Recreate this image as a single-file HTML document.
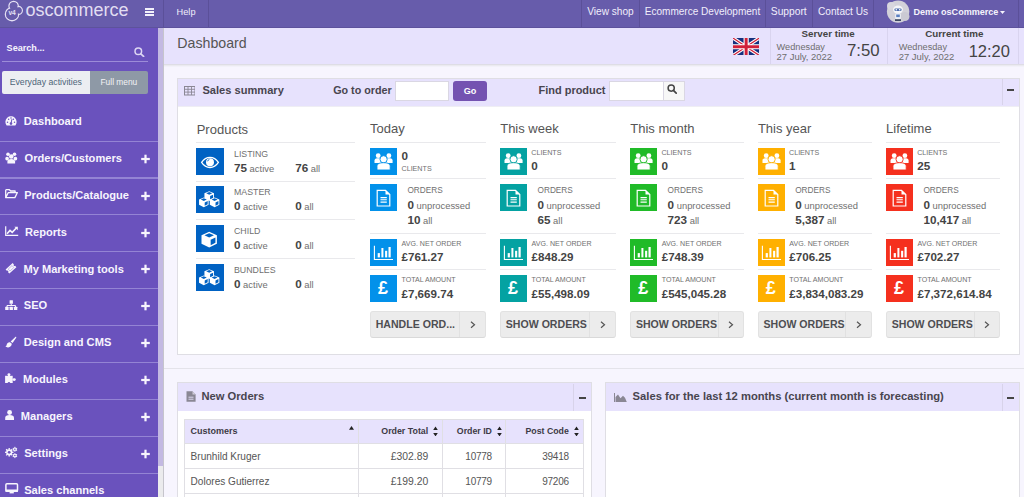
<!DOCTYPE html>
<html><head><meta charset="utf-8"><title>Dashboard</title>
<style>
html,body{margin:0;padding:0;}
body{width:1024px;height:497px;overflow:hidden;position:relative;font-family:"Liberation Sans",sans-serif;background:#f7f5fe;}
.t{position:absolute;white-space:nowrap;}
.r{position:absolute;display:block;}
</style></head><body>
<div class="r" style="left:0.00px;top:0.00px;width:1024.00px;height:497.00px;background:#f7f5fe;"></div>
<div class="r" style="left:0.00px;top:0.00px;width:1024.00px;height:28.00px;background:#675cab;"></div>
<div class="r" style="left:0.00px;top:27.00px;width:1024.00px;height:1.00px;background:#5d529c;"></div>
<div class="r" style="left:0.00px;top:28.00px;width:158.30px;height:469.00px;background:#6a52bd;"></div>
<div class="r" style="left:158.30px;top:28.00px;width:5.00px;height:469.00px;background:#ebebed;"></div>
<div class="r" style="left:158.30px;top:28.00px;width:5.00px;height:437.80px;background:#c3b9e2;"></div>
<div class="r" style="left:163.30px;top:28.00px;width:0.90px;height:469.00px;background:#c6c5cc;"></div>
<div class="r" style="left:164.20px;top:28.00px;width:859.80px;height:36.00px;background:#e7e2fd;"></div>
<div class="r" style="left:164.20px;top:64.00px;width:859.80px;height:1.00px;background:#dedde5;"></div>
<div class="r" style="left:164.20px;top:65.00px;width:859.80px;height:1.00px;background:#ebeaf0;"></div>
<div class="r" style="left:164.20px;top:66.00px;width:859.80px;height:1.00px;background:#f2f1f9;"></div>
<div class="r" style="left:162.50px;top:0.00px;width:1.00px;height:27.00px;background:#5b5099;"></div>
<div class="r" style="left:207.50px;top:0.00px;width:1.00px;height:27.00px;background:#5b5099;"></div>
<div class="r" style="left:581.00px;top:0.00px;width:1.00px;height:27.00px;background:#5b5099;"></div>
<div class="r" style="left:639.00px;top:0.00px;width:1.00px;height:27.00px;background:#5b5099;"></div>
<div class="r" style="left:765.00px;top:0.00px;width:1.00px;height:27.00px;background:#5b5099;"></div>
<div class="r" style="left:812.30px;top:0.00px;width:1.00px;height:27.00px;background:#5b5099;"></div>
<div class="r" style="left:872.90px;top:0.00px;width:1.00px;height:27.00px;background:#5b5099;"></div>
<div class="r" style="left:1018.00px;top:0.00px;width:1.00px;height:27.00px;background:#5b5099;"></div>
<svg class="r" style="left:0.00px;top:0.00px;" width="26" height="24" viewBox="0 0 26 24"><g fill="none" stroke="#e4e0f3" stroke-width="1.4"><circle cx="12" cy="14.2" r="6.6"/><circle cx="13.6" cy="6.1" r="4.6"/><circle cx="18.4" cy="10.4" r="3.9"/></g><g fill="#675cab"><circle cx="12" cy="14.2" r="5.9"/><circle cx="13.6" cy="6.1" r="3.9"/><circle cx="18.4" cy="10.4" r="3.2"/></g><text x="8.4" y="15.4" font-size="6.6" font-weight="700" fill="#e4e0f3" font-family="Liberation Sans">v4</text></svg>
<div class="t" style="left:25.50px;top:1.46px;font-size:18px;line-height:18px;font-weight:400;color:#e2def2;">oscommerce</div>
<div class="r" style="left:145.20px;top:8.30px;width:9.00px;height:1.60px;background:#f3f1fb;"></div>
<div class="r" style="left:145.20px;top:11.20px;width:9.00px;height:1.60px;background:#f3f1fb;"></div>
<div class="r" style="left:145.20px;top:14.10px;width:9.00px;height:1.60px;background:#f3f1fb;"></div>
<div class="t" style="left:176.60px;top:7.61px;font-size:9.2px;line-height:9.2px;font-weight:400;color:#f1eefb;">Help</div>
<div class="t" style="left:587.30px;top:7.35px;font-size:10.1px;line-height:10.1px;font-weight:400;color:#f1eefb;">View shop</div>
<div class="t" style="left:644.80px;top:7.40px;font-size:10.04px;line-height:10.04px;font-weight:400;color:#f1eefb;">Ecommerce Development</div>
<div class="t" style="left:770.80px;top:7.22px;font-size:10.25px;line-height:10.25px;font-weight:400;color:#f1eefb;">Support</div>
<div class="t" style="left:818.00px;top:7.31px;font-size:10.15px;line-height:10.15px;font-weight:400;color:#f1eefb;">Contact Us</div>
<svg class="r" style="left:885.50px;top:0.00px;" width="25" height="24" viewBox="0 0 25 24"><circle cx="12.1" cy="11.6" r="11.2" fill="#d2d1d9"/><circle cx="5" cy="6" r="4" fill="#d8d7de"/><circle cx="19" cy="16.5" r="4.5" fill="#cbcad3"/><ellipse cx="12" cy="9.6" rx="5" ry="4" fill="#f4f5f8"/><rect x="8.4" y="8.4" width="7.2" height="2.6" rx="1.2" fill="#4f6fae"/><circle cx="10.3" cy="9.7" r=".8" fill="#fff"/><circle cx="13.7" cy="9.7" r=".8" fill="#fff"/><rect x="9.2" y="13.3" width="5.6" height="6" rx="1.5" fill="#eef1f7"/><rect x="10.2" y="14.5" width="3.6" height="2.6" fill="#5a7fc0"/><rect x="9" y="19.3" width="6" height="1.6" fill="#2e3a55"/></svg>
<div class="t" style="left:913.40px;top:7.64px;font-size:9.05px;line-height:9.05px;font-weight:700;color:#f5f3fc;">Demo osCommerce</div>
<svg class="r" style="left:1000.30px;top:10.50px;" width="5" height="3" viewBox="0 0 5 3"><path d="M0 0h5l-2.5 3z" fill="#f5f3fc"/></svg>
<div class="t" style="left:177.30px;top:36.28px;font-size:14.2px;line-height:14.2px;font-weight:400;color:#555;">Dashboard</div>
<svg class="r" style="left:732.50px;top:37.50px;" width="26.3" height="17.5" viewBox="0 0 26.3 17.5"><rect width="26.3" height="17.5" fill="#15307f"/>
<path d="M0 0L26.3 17.5M26.3 0L0 17.5" stroke="#fff" stroke-width="3.4"/>
<path d="M0 0L26.3 17.5M26.3 0L0 17.5" stroke="#d0203a" stroke-width="1.2"/>
<path d="M13.15 0V17.5M0 8.75H26.3" stroke="#fff" stroke-width="5.2"/>
<path d="M13.15 0V17.5M0 8.75H26.3" stroke="#d0203a" stroke-width="3"/></svg>
<div class="r" style="left:769.50px;top:28.00px;width:1.00px;height:36.00px;background:#d9d4ef;"></div>
<div class="r" style="left:886.90px;top:28.00px;width:1.00px;height:36.00px;background:#d9d4ef;"></div>
<div class="r" style="left:1018.20px;top:28.00px;width:1.00px;height:36.00px;background:#d9d4ef;"></div>
<div class="t" style="left:801.60px;top:29.15px;font-size:9.75px;line-height:9.75px;font-weight:700;color:#444;">Server time</div>
<div class="t" style="left:776.60px;top:42.91px;font-size:9.2px;line-height:9.2px;font-weight:400;color:#6e6e6e;">Wednesday</div>
<div class="t" style="left:776.60px;top:52.09px;font-size:9.46px;line-height:9.46px;font-weight:400;color:#6e6e6e;">27 July, 2022</div>
<div class="t" style="left:846.90px;top:42.98px;font-size:16.8px;line-height:16.8px;font-weight:400;color:#444;">7:50</div>
<div class="t" style="left:925.25px;top:29.10px;font-size:9.8px;line-height:9.8px;font-weight:700;color:#444;">Current time</div>
<div class="t" style="left:898.70px;top:42.91px;font-size:9.2px;line-height:9.2px;font-weight:400;color:#6e6e6e;">Wednesday</div>
<div class="t" style="left:898.70px;top:52.09px;font-size:9.46px;line-height:9.46px;font-weight:400;color:#6e6e6e;">27 July, 2022</div>
<div class="t" style="left:968.70px;top:43.23px;font-size:16.5px;line-height:16.5px;font-weight:400;color:#444;">12:20</div>
<div class="t" style="left:6.60px;top:43.70px;font-size:9.1px;line-height:9.1px;font-weight:700;color:#f7f5fd;">Search...</div>
<svg class="r" style="left:133.50px;top:47.00px;" width="11" height="10" viewBox="0 0 11 10"><circle cx="4.3" cy="4.2" r="3.3" fill="none" stroke="#ddd6f3" stroke-width="1.5"/><path d="M6.8 6.8L9.6 9.4" stroke="#ddd6f3" stroke-width="1.7" stroke-linecap="round"/></svg>
<div class="r" style="left:2.20px;top:60.60px;width:145.50px;height:1.00px;background:#9c8cd8;"></div>
<div class="r" style="left:2.30px;top:71.30px;width:87.50px;height:22.70px;background:#eceef2;border-radius:2px 0 0 2px;"></div>
<div class="r" style="left:89.80px;top:71.30px;width:57.90px;height:22.70px;background:#8e99a6;border-radius:0 2px 2px 0;"></div>
<div class="t" style="left:9.70px;top:78.11px;font-size:8.73px;line-height:8.73px;font-weight:400;color:#4d6578;">Everyday activities</div>
<div class="t" style="left:100.50px;top:78.39px;font-size:8.4px;line-height:8.4px;font-weight:400;color:#f2f3f5;">Full menu</div>
<div class="t" style="left:23.80px;top:115.90px;font-size:11.1px;line-height:11.1px;font-weight:700;color:#f7f5fd;">Dashboard</div>
<div class="r" style="left:0.00px;top:140.50px;width:158.30px;height:1.20px;background:#9484d4;"></div>
<div class="t" style="left:24.50px;top:152.80px;font-size:11.1px;line-height:11.1px;font-weight:700;color:#f7f5fd;">Orders/Customers</div>
<svg class="r" style="left:140.00px;top:153.70px;" width="11" height="10" viewBox="0 0 11 10"><rect x="1.2" y="3.9" width="8.6" height="2.2" fill="#f7f5fd"/><rect x="4.4" y=".7" width="2.2" height="8.6" fill="#f7f5fd"/></svg>
<div class="r" style="left:0.00px;top:177.40px;width:158.30px;height:1.20px;background:#9484d4;"></div>
<div class="t" style="left:24.20px;top:189.70px;font-size:11.1px;line-height:11.1px;font-weight:700;color:#f7f5fd;">Products/Catalogue</div>
<svg class="r" style="left:140.00px;top:190.60px;" width="11" height="10" viewBox="0 0 11 10"><rect x="1.2" y="3.9" width="8.6" height="2.2" fill="#f7f5fd"/><rect x="4.4" y=".7" width="2.2" height="8.6" fill="#f7f5fd"/></svg>
<div class="r" style="left:0.00px;top:214.30px;width:158.30px;height:1.20px;background:#9484d4;"></div>
<div class="t" style="left:25.00px;top:226.60px;font-size:11.1px;line-height:11.1px;font-weight:700;color:#f7f5fd;">Reports</div>
<svg class="r" style="left:140.00px;top:227.50px;" width="11" height="10" viewBox="0 0 11 10"><rect x="1.2" y="3.9" width="8.6" height="2.2" fill="#f7f5fd"/><rect x="4.4" y=".7" width="2.2" height="8.6" fill="#f7f5fd"/></svg>
<div class="r" style="left:0.00px;top:251.20px;width:158.30px;height:1.20px;background:#9484d4;"></div>
<div class="t" style="left:23.40px;top:263.50px;font-size:11.1px;line-height:11.1px;font-weight:700;color:#f7f5fd;">My Marketing tools</div>
<svg class="r" style="left:140.00px;top:264.40px;" width="11" height="10" viewBox="0 0 11 10"><rect x="1.2" y="3.9" width="8.6" height="2.2" fill="#f7f5fd"/><rect x="4.4" y=".7" width="2.2" height="8.6" fill="#f7f5fd"/></svg>
<div class="r" style="left:0.00px;top:288.10px;width:158.30px;height:1.20px;background:#9484d4;"></div>
<div class="t" style="left:23.75px;top:300.40px;font-size:11.1px;line-height:11.1px;font-weight:700;color:#f7f5fd;">SEO</div>
<svg class="r" style="left:140.00px;top:301.30px;" width="11" height="10" viewBox="0 0 11 10"><rect x="1.2" y="3.9" width="8.6" height="2.2" fill="#f7f5fd"/><rect x="4.4" y=".7" width="2.2" height="8.6" fill="#f7f5fd"/></svg>
<div class="r" style="left:0.00px;top:325.00px;width:158.30px;height:1.20px;background:#9484d4;"></div>
<div class="t" style="left:23.75px;top:337.30px;font-size:11.1px;line-height:11.1px;font-weight:700;color:#f7f5fd;">Design and CMS</div>
<svg class="r" style="left:140.00px;top:338.20px;" width="11" height="10" viewBox="0 0 11 10"><rect x="1.2" y="3.9" width="8.6" height="2.2" fill="#f7f5fd"/><rect x="4.4" y=".7" width="2.2" height="8.6" fill="#f7f5fd"/></svg>
<div class="r" style="left:0.00px;top:361.90px;width:158.30px;height:1.20px;background:#9484d4;"></div>
<div class="t" style="left:22.90px;top:374.20px;font-size:11.1px;line-height:11.1px;font-weight:700;color:#f7f5fd;">Modules</div>
<svg class="r" style="left:140.00px;top:375.10px;" width="11" height="10" viewBox="0 0 11 10"><rect x="1.2" y="3.9" width="8.6" height="2.2" fill="#f7f5fd"/><rect x="4.4" y=".7" width="2.2" height="8.6" fill="#f7f5fd"/></svg>
<div class="r" style="left:0.00px;top:398.80px;width:158.30px;height:1.20px;background:#9484d4;"></div>
<div class="t" style="left:20.80px;top:411.10px;font-size:11.1px;line-height:11.1px;font-weight:700;color:#f7f5fd;">Managers</div>
<svg class="r" style="left:140.00px;top:412.00px;" width="11" height="10" viewBox="0 0 11 10"><rect x="1.2" y="3.9" width="8.6" height="2.2" fill="#f7f5fd"/><rect x="4.4" y=".7" width="2.2" height="8.6" fill="#f7f5fd"/></svg>
<div class="r" style="left:0.00px;top:435.70px;width:158.30px;height:1.20px;background:#9484d4;"></div>
<div class="t" style="left:24.20px;top:448.00px;font-size:11.1px;line-height:11.1px;font-weight:700;color:#f7f5fd;">Settings</div>
<svg class="r" style="left:140.00px;top:448.90px;" width="11" height="10" viewBox="0 0 11 10"><rect x="1.2" y="3.9" width="8.6" height="2.2" fill="#f7f5fd"/><rect x="4.4" y=".7" width="2.2" height="8.6" fill="#f7f5fd"/></svg>
<div class="r" style="left:0.00px;top:472.60px;width:158.30px;height:1.20px;background:#9484d4;"></div>
<div class="t" style="left:24.20px;top:484.90px;font-size:11.1px;line-height:11.1px;font-weight:700;color:#f7f5fd;">Sales channels</div>
<svg class="r" style="left:5.20px;top:115.80px;" width="12" height="10" viewBox="0 0 12 10"><path d="M1.63 9.4A5.6 5.6 0 1 1 10.37 9.4Z" fill="#f7f5fd"/><circle cx="6" cy="7.6" r="1.3" fill="#6a52bd"/><path d="M6 7.6L6.9 3.2" stroke="#6a52bd" stroke-width="1"/><circle cx="2.5" cy="6.2" r=".75" fill="#6a52bd"/><circle cx="3.6" cy="3.3" r=".75" fill="#6a52bd"/><circle cx="6" cy="2" r=".75" fill="#6a52bd"/><circle cx="8.4" cy="3.3" r=".75" fill="#6a52bd"/><circle cx="9.5" cy="6.2" r=".75" fill="#6a52bd"/></svg>
<svg class="r" style="left:5.20px;top:151.50px;" width="12.5" height="12" viewBox="0 0 12.5 12"><circle cx="3" cy="2.2" r="1.8" fill="#f7f5fd"/><circle cx="9.5" cy="2.2" r="1.8" fill="#f7f5fd"/><circle cx="6.25" cy="4.5" r="2.3" fill="#f7f5fd"/><rect x="0.3" y="4.8" width="3.6" height="3.6" rx="1.6" fill="#f7f5fd"/><rect x="8.6" y="4.8" width="3.6" height="3.6" rx="1.6" fill="#f7f5fd"/><path d="M2.4 11.4V9.5c0-1.7 1.6-2.6 3.85-2.6s3.85.9 3.85 2.6v1.9z" fill="#f7f5fd"/></svg>
<svg class="r" style="left:5.20px;top:189.20px;" width="13" height="9.5" viewBox="0 0 13 9.5"><path d="M0.7 8.6V1.4c0-.4.3-.7.7-.7h3l1.2 1.3h4.5v1.6M0.7 8.6h9.2l2.4-4.9H3.2z" fill="none" stroke="#f7f5fd" stroke-width="1.3" stroke-linejoin="round"/></svg>
<svg class="r" style="left:5.20px;top:226.00px;" width="13.5" height="10" viewBox="0 0 13.5 10"><path d="M0.7 0.3V9.3H13.2" fill="none" stroke="#f7f5fd" stroke-width="1.2"/><path d="M2 7.8L5 4.4L7.2 6.3L11.6 1.8" fill="none" stroke="#f7f5fd" stroke-width="1.6"/><path d="M9.4 0.8h3.4v3.4z" fill="#f7f5fd"/></svg>
<svg class="r" style="left:5.00px;top:261.50px;" width="12" height="13" viewBox="0 0 12 13"><g transform="rotate(-42 6 6.3)"><path d="M1.25 3.5H10.75V5.4A.9 .9 0 0 0 10.75 7.2V9.1H1.25V7.2A.9 .9 0 0 0 1.25 5.4Z" fill="#f7f5fd"/><rect x="3.4" y="5" width="5.2" height="2.6" fill="none" stroke="#b2a6e4" stroke-width=".7"/></g></svg>
<svg class="r" style="left:5.20px;top:299.50px;" width="12.5" height="10.5" viewBox="0 0 12.5 10.5"><rect x="4.6" y="0.2" width="3.3" height="3.6" rx=".4" fill="#f7f5fd"/><path d="M6.25 3.8V5.5M2 7V5.5H10.5V7" fill="none" stroke="#f7f5fd" stroke-width="1"/><rect x="0.2" y="6.8" width="3.4" height="3.5" rx=".4" fill="#f7f5fd"/><rect x="4.55" y="6.8" width="3.4" height="3.5" rx=".4" fill="#f7f5fd"/><rect x="8.9" y="6.8" width="3.4" height="3.5" rx=".4" fill="#f7f5fd"/></svg>
<svg class="r" style="left:5.00px;top:335.50px;" width="12" height="12.5" viewBox="0 0 12 12.5"><path d="M10.3 0.9c.6-.4 1.3.2.9.8L7.6 7.1 5.6 5.6z" fill="#f7f5fd"/><path d="M5 6.3l1.8 1.4c-.1 2.1-1.6 3.6-3.6 3.7-1.1.1-2.2-.3-2.9-.8.9-.4 1.2-1 1.4-1.9.3-1.6 1.6-2.6 3.3-2.4z" fill="#f7f5fd"/></svg>
<svg class="r" style="left:5.20px;top:372.80px;" width="11.5" height="10.5" viewBox="0 0 11.5 10.5"><rect x="0.1" y="2.8" width="7.6" height="7.3" fill="#f7f5fd"/><circle cx="3.95" cy="1.6" r="1.45" fill="#f7f5fd"/><rect x="3.1" y="1.6" width="1.7" height="1.5" fill="#f7f5fd"/><circle cx="9.3" cy="6.6" r="1.45" fill="#f7f5fd"/><rect x="7.5" y="5.8" width="1.8" height="1.6" fill="#f7f5fd"/><circle cx="3.95" cy="10.3" r="1.35" fill="#6a52bd"/></svg>
<svg class="r" style="left:5.20px;top:410.00px;" width="9" height="10" viewBox="0 0 9 10"><circle cx="4.6" cy="2.5" r="2.4" fill="#f7f5fd"/><path d="M0.2 10V7.7c0-1.8 1.6-2.8 4.4-2.8s4.4 1 4.4 2.8V10z" fill="#f7f5fd"/></svg>
<svg class="r" style="left:5.00px;top:446.00px;" width="13" height="13" viewBox="0 0 13 13"><circle cx="4.2" cy="6.3" r="3.1" fill="#f7f5fd"/><rect x="3.55" y="2.00" width="1.3" height="1.70" fill="#f7f5fd" transform="rotate(0.0 4.2 6.3)"/><rect x="3.55" y="2.00" width="1.3" height="1.70" fill="#f7f5fd" transform="rotate(45.0 4.2 6.3)"/><rect x="3.55" y="2.00" width="1.3" height="1.70" fill="#f7f5fd" transform="rotate(90.0 4.2 6.3)"/><rect x="3.55" y="2.00" width="1.3" height="1.70" fill="#f7f5fd" transform="rotate(135.0 4.2 6.3)"/><rect x="3.55" y="2.00" width="1.3" height="1.70" fill="#f7f5fd" transform="rotate(180.0 4.2 6.3)"/><rect x="3.55" y="2.00" width="1.3" height="1.70" fill="#f7f5fd" transform="rotate(225.0 4.2 6.3)"/><rect x="3.55" y="2.00" width="1.3" height="1.70" fill="#f7f5fd" transform="rotate(270.0 4.2 6.3)"/><rect x="3.55" y="2.00" width="1.3" height="1.70" fill="#f7f5fd" transform="rotate(315.0 4.2 6.3)"/><circle cx="4.2" cy="6.3" r="1.4" fill="#6a52bd"/><circle cx="9.9" cy="3.3" r="1.8" fill="#f7f5fd"/><rect x="9.45" y="0.80" width="0.9" height="1.20" fill="#f7f5fd" transform="rotate(0.0 9.9 3.3)"/><rect x="9.45" y="0.80" width="0.9" height="1.20" fill="#f7f5fd" transform="rotate(60.0 9.9 3.3)"/><rect x="9.45" y="0.80" width="0.9" height="1.20" fill="#f7f5fd" transform="rotate(120.0 9.9 3.3)"/><rect x="9.45" y="0.80" width="0.9" height="1.20" fill="#f7f5fd" transform="rotate(180.0 9.9 3.3)"/><rect x="9.45" y="0.80" width="0.9" height="1.20" fill="#f7f5fd" transform="rotate(240.0 9.9 3.3)"/><rect x="9.45" y="0.80" width="0.9" height="1.20" fill="#f7f5fd" transform="rotate(300.0 9.9 3.3)"/><circle cx="9.9" cy="3.3" r="0.75" fill="#6a52bd"/><circle cx="9.9" cy="9.6" r="1.8" fill="#f7f5fd"/><rect x="9.45" y="7.10" width="0.9" height="1.20" fill="#f7f5fd" transform="rotate(0.0 9.9 9.6)"/><rect x="9.45" y="7.10" width="0.9" height="1.20" fill="#f7f5fd" transform="rotate(60.0 9.9 9.6)"/><rect x="9.45" y="7.10" width="0.9" height="1.20" fill="#f7f5fd" transform="rotate(120.0 9.9 9.6)"/><rect x="9.45" y="7.10" width="0.9" height="1.20" fill="#f7f5fd" transform="rotate(180.0 9.9 9.6)"/><rect x="9.45" y="7.10" width="0.9" height="1.20" fill="#f7f5fd" transform="rotate(240.0 9.9 9.6)"/><rect x="9.45" y="7.10" width="0.9" height="1.20" fill="#f7f5fd" transform="rotate(300.0 9.9 9.6)"/><circle cx="9.9" cy="9.6" r="0.75" fill="#6a52bd"/></svg>
<svg class="r" style="left:5.20px;top:483.00px;" width="13.5" height="11" viewBox="0 0 13.5 11"><rect x="0.9" y="0.8" width="11.6" height="7.5" rx="1" fill="none" stroke="#f7f5fd" stroke-width="1.5"/><rect x="0.5" y="6.5" width="12.5" height="2.4" fill="#f7f5fd"/><rect x="4.6" y="8.6" width="4.2" height="1.8" fill="#f7f5fd"/></svg>
<div class="r" style="left:177.00px;top:78.00px;width:843.00px;height:276.50px;background:#fff;border:1px solid #dfdee4;box-sizing:border-box;"></div>
<div class="r" style="left:178.00px;top:79.00px;width:841.00px;height:26.60px;background:#e7e2fd;"></div>
<div class="r" style="left:178.00px;top:106.00px;width:841.00px;height:1.00px;background:#efeef4;"></div>
<svg class="r" style="left:183.70px;top:86.30px;" width="11.5" height="9.5" viewBox="0 0 11.5 9.5"><rect x=".5" y=".5" width="10.5" height="8.5" fill="none" stroke="#8a8794" stroke-width="1"/><path d="M.5 3.3H11M.5 6.1H11M4 .5V9M7.5 .5V9" stroke="#8a8794" stroke-width=".9"/></svg>
<div class="t" style="left:202.40px;top:85.20px;font-size:11.1px;line-height:11.1px;font-weight:700;color:#48454f;">Sales summary</div>
<div class="t" style="left:333.20px;top:85.10px;font-size:10.75px;line-height:10.75px;font-weight:700;color:#48454f;">Go to order</div>
<div class="r" style="left:395.20px;top:81.40px;width:54.30px;height:19.20px;background:#fff;border:1px solid #dad7e3;box-sizing:border-box;"></div>
<div class="r" style="left:452.70px;top:81.40px;width:34.60px;height:19.20px;background:#7452b1;border-radius:3px;"></div>
<div class="t" style="left:463.80px;top:86.90px;font-size:9.1px;line-height:9.1px;font-weight:700;color:#fff;">Go</div>
<div class="t" style="left:538.50px;top:84.91px;font-size:10.98px;line-height:10.98px;font-weight:700;color:#48454f;">Find product</div>
<div class="r" style="left:609.10px;top:81.40px;width:54.90px;height:19.20px;background:#fff;border:1px solid #dad7e3;box-sizing:border-box;"></div>
<div class="r" style="left:663.20px;top:81.40px;width:21.50px;height:19.20px;background:#f7f7f7;border:1px solid #dad7e3;box-sizing:border-box;"></div>
<svg class="r" style="left:666.50px;top:84.30px;" width="10.5" height="10" viewBox="0 0 10.5 10"><circle cx="4.2" cy="4.1" r="3.1" fill="none" stroke="#444" stroke-width="1.5"/><path d="M6.4 6.4L9.2 9.1" stroke="#444" stroke-width="1.7" stroke-linecap="round"/></svg>
<div class="r" style="left:1002.10px;top:79.00px;width:1.00px;height:25.50px;background:#d8d3ea;"></div>
<div class="r" style="left:1007.00px;top:89.00px;width:7.00px;height:2.00px;background:#444;"></div>
<div class="t" style="left:196.70px;top:122.50px;font-size:13px;line-height:13px;font-weight:400;color:#555;">Products</div>
<div class="r" style="left:196.30px;top:142.20px;width:159.10px;height:1.00px;background:#e9e9ec;"></div>
<div class="r" style="left:196.30px;top:147.80px;width:27.50px;height:27.20px;background:#0062c3;"></div>
<svg class="r" style="left:196.30px;top:147.80px;" width="27.5" height="27.2" viewBox="0 0 27.5 27.2"><path d="M5.6 14.4C7.8 11 10.6 9.3 14 9.3S20.2 11 22.4 14.4C20.2 17.8 17.4 19.5 14 19.5S7.8 17.8 5.6 14.4Z" fill="none" stroke="#fff" stroke-width="1.3"/><circle cx="14" cy="14.3" r="4" fill="#fff"/><path d="M11.6 13.3A2.6 2.6 0 0 1 13.4 11.4" stroke="#0062c3" stroke-width=".9" fill="none"/></svg>
<div class="t" style="left:234.00px;top:149.85px;font-size:8.8px;line-height:8.8px;font-weight:400;color:#707070;">LISTING</div>
<div class="t" style="left:234.00px;top:162.00px;font-size:11.7px;line-height:11.7px;"><span style="font-weight:700;font-size:11.7px;color:#444">75</span><span style="font-weight:400;font-size:9.4px;color:#707070"> active</span></div>
<div class="t" style="left:295.20px;top:162.00px;font-size:11.7px;line-height:11.7px;"><span style="font-weight:700;font-size:11.7px;color:#444">76</span><span style="font-weight:400;font-size:9.4px;color:#707070"> all</span></div>
<div class="r" style="left:196.30px;top:180.60px;width:159.10px;height:1.00px;background:#e9e9ec;"></div>
<div class="r" style="left:196.30px;top:186.10px;width:27.50px;height:27.20px;background:#0062c3;"></div>
<svg class="r" style="left:196.30px;top:186.10px;" width="27.5" height="27.2" viewBox="0 0 27.5 27.2"><path d="M13.20 5.16L17.97 7.33L17.97 12.54L13.20 14.89L8.43 12.54L8.43 7.33Z" fill="#fff"/><path d="M13.20 5.98L16.16 7.33L13.20 8.68L10.24 7.33Z" fill="#0062c3"/><path d="M14.11 10.09L17.07 8.75L17.07 11.98L14.11 13.44Z" fill="#0062c3"/><path d="M7.80 11.46L12.57 13.63L12.57 18.84L7.80 21.19L3.03 18.84L3.03 13.63Z" fill="#fff"/><path d="M7.80 12.28L10.76 13.63L7.80 14.98L4.84 13.63Z" fill="#0062c3"/><path d="M8.71 16.39L11.67 15.05L11.67 18.28L8.71 19.74Z" fill="#0062c3"/><path d="M18.60 11.46L23.37 13.63L23.37 18.84L18.60 21.19L13.83 18.84L13.83 13.63Z" fill="#fff"/><path d="M18.60 12.28L21.56 13.63L18.60 14.98L15.64 13.63Z" fill="#0062c3"/><path d="M19.51 16.39L22.47 15.05L22.47 18.28L19.51 19.74Z" fill="#0062c3"/></svg>
<div class="t" style="left:234.00px;top:188.15px;font-size:8.8px;line-height:8.8px;font-weight:400;color:#707070;">MASTER</div>
<div class="t" style="left:234.00px;top:200.30px;font-size:11.7px;line-height:11.7px;"><span style="font-weight:700;font-size:11.7px;color:#444">0</span><span style="font-weight:400;font-size:9.4px;color:#707070"> active</span></div>
<div class="t" style="left:295.20px;top:200.30px;font-size:11.7px;line-height:11.7px;"><span style="font-weight:700;font-size:11.7px;color:#444">0</span><span style="font-weight:400;font-size:9.4px;color:#707070"> all</span></div>
<div class="r" style="left:196.30px;top:219.30px;width:159.10px;height:1.00px;background:#e9e9ec;"></div>
<div class="r" style="left:196.30px;top:225.00px;width:27.50px;height:27.20px;background:#0062c3;"></div>
<svg class="r" style="left:196.30px;top:225.00px;" width="27.5" height="27.2" viewBox="0 0 27.5 27.2"><path d="M13.20 6.80L20.90 10.30L20.90 18.70L13.20 22.50L5.50 18.70L5.50 10.30Z" fill="#fff"/><path d="M13.20 8.13L17.97 10.30L13.20 12.47L8.43 10.30Z" fill="#0062c3"/><path d="M14.66 14.76L19.44 12.59L19.44 17.80L14.66 20.15Z" fill="#0062c3"/></svg>
<div class="t" style="left:234.00px;top:227.05px;font-size:8.8px;line-height:8.8px;font-weight:400;color:#707070;">CHILD</div>
<div class="t" style="left:234.00px;top:239.20px;font-size:11.7px;line-height:11.7px;"><span style="font-weight:700;font-size:11.7px;color:#444">0</span><span style="font-weight:400;font-size:9.4px;color:#707070"> active</span></div>
<div class="t" style="left:295.20px;top:239.20px;font-size:11.7px;line-height:11.7px;"><span style="font-weight:700;font-size:11.7px;color:#444">0</span><span style="font-weight:400;font-size:9.4px;color:#707070"> all</span></div>
<div class="r" style="left:196.30px;top:257.95px;width:159.10px;height:1.00px;background:#e9e9ec;"></div>
<div class="r" style="left:196.30px;top:263.60px;width:27.50px;height:27.20px;background:#0062c3;"></div>
<svg class="r" style="left:196.30px;top:263.60px;" width="27.5" height="27.2" viewBox="0 0 27.5 27.2"><path d="M13.20 5.16L17.97 7.33L17.97 12.54L13.20 14.89L8.43 12.54L8.43 7.33Z" fill="#fff"/><path d="M13.20 5.98L16.16 7.33L13.20 8.68L10.24 7.33Z" fill="#0062c3"/><path d="M14.11 10.09L17.07 8.75L17.07 11.98L14.11 13.44Z" fill="#0062c3"/><path d="M7.80 11.46L12.57 13.63L12.57 18.84L7.80 21.19L3.03 18.84L3.03 13.63Z" fill="#fff"/><path d="M7.80 12.28L10.76 13.63L7.80 14.98L4.84 13.63Z" fill="#0062c3"/><path d="M8.71 16.39L11.67 15.05L11.67 18.28L8.71 19.74Z" fill="#0062c3"/><path d="M18.60 11.46L23.37 13.63L23.37 18.84L18.60 21.19L13.83 18.84L13.83 13.63Z" fill="#fff"/><path d="M18.60 12.28L21.56 13.63L18.60 14.98L15.64 13.63Z" fill="#0062c3"/><path d="M19.51 16.39L22.47 15.05L22.47 18.28L19.51 19.74Z" fill="#0062c3"/></svg>
<div class="t" style="left:234.00px;top:265.65px;font-size:8.8px;line-height:8.8px;font-weight:400;color:#707070;">BUNDLES</div>
<div class="t" style="left:234.00px;top:277.80px;font-size:11.7px;line-height:11.7px;"><span style="font-weight:700;font-size:11.7px;color:#444">0</span><span style="font-weight:400;font-size:9.4px;color:#707070"> active</span></div>
<div class="t" style="left:295.20px;top:277.80px;font-size:11.7px;line-height:11.7px;"><span style="font-weight:700;font-size:11.7px;color:#444">0</span><span style="font-weight:400;font-size:9.4px;color:#707070"> all</span></div>
<div class="t" style="left:370.10px;top:122.40px;font-size:13px;line-height:13px;font-weight:400;color:#555;">Today</div>
<div class="r" style="left:369.70px;top:142.20px;width:116.00px;height:1.00px;background:#e9e9ec;"></div>
<div class="r" style="left:369.70px;top:147.90px;width:27.30px;height:27.30px;background:#0291ea;"></div>
<svg class="r" style="left:369.70px;top:147.90px;" width="27.3" height="27.3" viewBox="0 0 27.3 27.3"><circle cx="8.2" cy="7.7" r="2.4" fill="#fff"/><circle cx="18.9" cy="7.7" r="2.4" fill="#fff"/><path d="M4.5 14.9V12.6c0-1.4.9-2.4 2.6-2.4h2c1.6 0 2.5 1 2.5 2.4v2.3z" fill="#fff"/><path d="M15.5 14.9V12.6c0-1.4.9-2.4 2.5-2.4h2c1.7 0 2.6 1 2.6 2.4v2.3z" fill="#fff"/><circle cx="13.6" cy="11.3" r="3.6" fill="#fff" stroke="#0291ea" stroke-width=".9"/><path d="M7 22V18.3c0-2.2 2-3.6 6.6-3.6s6.6 1.4 6.6 3.6V22z" fill="#fff" stroke="#0291ea" stroke-width=".9"/></svg>
<div class="t" style="left:401.50px;top:149.60px;font-size:11.7px;line-height:11.7px;"><span style="font-weight:700;font-size:11.7px;color:#444">0</span></div>
<div class="t" style="left:401.50px;top:165.95px;font-size:7.15px;line-height:7.15px;font-weight:400;color:#707070;">CLIENTS</div>
<div class="r" style="left:369.70px;top:178.30px;width:116.00px;height:1.00px;background:#e9e9ec;"></div>
<div class="r" style="left:369.70px;top:184.00px;width:27.30px;height:27.30px;background:#0291ea;"></div>
<svg class="r" style="left:369.70px;top:184.00px;" width="27.3" height="27.3" viewBox="0 0 27.3 27.3"><path d="M7.2 6.3H15.5L19.8 10.6V22H7.2Z" fill="none" stroke="#fff" stroke-width="1.2"/><path d="M15.5 6.3V10.6H19.8Z" fill="#fff"/><path d="M10.5 13.6H16.8M10.5 15.8H16.8M10.5 18.1H16.8" stroke="#fff" stroke-width="1.1"/></svg>
<div class="t" style="left:407.40px;top:186.62px;font-size:8.25px;line-height:8.25px;font-weight:400;color:#707070;">ORDERS</div>
<div class="t" style="left:407.40px;top:199.30px;font-size:11.7px;line-height:11.7px;"><span style="font-weight:700;font-size:11.7px;color:#444">0</span><span style="font-weight:400;font-size:9.4px;color:#707070"> unprocessed</span></div>
<div class="t" style="left:407.40px;top:214.20px;font-size:11.7px;line-height:11.7px;"><span style="font-weight:700;font-size:11.7px;color:#444">10</span><span style="font-weight:400;font-size:9.4px;color:#707070"> all</span></div>
<div class="r" style="left:369.70px;top:233.20px;width:116.00px;height:1.00px;background:#e9e9ec;"></div>
<div class="r" style="left:369.70px;top:238.80px;width:27.30px;height:27.20px;background:#0291ea;"></div>
<svg class="r" style="left:369.70px;top:238.80px;" width="27.3" height="27.3" viewBox="0 0 27.3 27.3"><path d="M4.4 6.8V20.5H23" fill="none" stroke="#fff" stroke-width="1.1"/><rect x="7.7" y="14.1" width="2.2" height="4.3" fill="#fff"/><rect x="11.4" y="9" width="2" height="9.4" fill="#fff"/><rect x="15.1" y="11.8" width="2.1" height="6.6" fill="#fff"/><rect x="18.5" y="8" width="2.2" height="10.4" fill="#fff"/></svg>
<div class="t" style="left:401.50px;top:240.71px;font-size:7.08px;line-height:7.08px;font-weight:400;color:#707070;">AVG. NET ORDER</div>
<div class="t" style="left:401.50px;top:251.38px;font-size:11.6px;line-height:11.6px;"><span style="font-weight:700;font-size:11.6px;color:#444">£761.27</span></div>
<div class="r" style="left:369.70px;top:269.30px;width:116.00px;height:1.00px;background:#e9e9ec;"></div>
<div class="r" style="left:369.70px;top:275.00px;width:27.30px;height:27.30px;background:#0291ea;"></div>
<div class="t" style="left:378.00px;top:279.36px;font-size:18px;line-height:18px;font-weight:700;color:#fff;">£</div>
<div class="t" style="left:401.50px;top:277.01px;font-size:7.08px;line-height:7.08px;font-weight:400;color:#707070;">TOTAL AMOUNT</div>
<div class="t" style="left:401.50px;top:287.68px;font-size:11.6px;line-height:11.6px;"><span style="font-weight:700;font-size:11.6px;color:#444">£7,669.74</span></div>
<div class="r" style="left:369.70px;top:310.70px;width:116.00px;height:27.30px;background:#ececec;border:1px solid #e2e2e2;border-bottom-color:#d9d9d9;border-radius:3px;box-sizing:border-box;"></div>
<div class="r" style="left:459.10px;top:311.50px;width:1.00px;height:25.70px;background:#e1e1e1;"></div>
<div class="t" style="left:375.70px;top:319.34px;font-size:10.58px;line-height:10.58px;font-weight:700;color:#4e4e52;">HANDLE ORD...</div>
<svg class="r" style="left:469.70px;top:321.00px;" width="6" height="7.5" viewBox="0 0 6 7.5"><path d="M1 .8L4.5 3.75L1 6.7" fill="none" stroke="#555" stroke-width="1.2"/></svg>
<div class="t" style="left:500.20px;top:122.40px;font-size:13px;line-height:13px;font-weight:400;color:#555;">This week</div>
<div class="r" style="left:499.80px;top:142.20px;width:115.80px;height:1.00px;background:#e9e9ec;"></div>
<div class="r" style="left:499.80px;top:147.90px;width:27.30px;height:27.30px;background:#04a2a2;"></div>
<svg class="r" style="left:499.80px;top:147.90px;" width="27.3" height="27.3" viewBox="0 0 27.3 27.3"><circle cx="8.2" cy="7.7" r="2.4" fill="#fff"/><circle cx="18.9" cy="7.7" r="2.4" fill="#fff"/><path d="M4.5 14.9V12.6c0-1.4.9-2.4 2.6-2.4h2c1.6 0 2.5 1 2.5 2.4v2.3z" fill="#fff"/><path d="M15.5 14.9V12.6c0-1.4.9-2.4 2.5-2.4h2c1.7 0 2.6 1 2.6 2.4v2.3z" fill="#fff"/><circle cx="13.6" cy="11.3" r="3.6" fill="#fff" stroke="#04a2a2" stroke-width=".9"/><path d="M7 22V18.3c0-2.2 2-3.6 6.6-3.6s6.6 1.4 6.6 3.6V22z" fill="#fff" stroke="#04a2a2" stroke-width=".9"/></svg>
<div class="t" style="left:531.30px;top:149.75px;font-size:7.15px;line-height:7.15px;font-weight:400;color:#707070;">CLIENTS</div>
<div class="t" style="left:531.30px;top:160.30px;font-size:11.7px;line-height:11.7px;"><span style="font-weight:700;font-size:11.7px;color:#444">0</span></div>
<div class="r" style="left:499.80px;top:178.30px;width:115.80px;height:1.00px;background:#e9e9ec;"></div>
<div class="r" style="left:499.80px;top:184.00px;width:27.30px;height:27.30px;background:#04a2a2;"></div>
<svg class="r" style="left:499.80px;top:184.00px;" width="27.3" height="27.3" viewBox="0 0 27.3 27.3"><path d="M7.2 6.3H15.5L19.8 10.6V22H7.2Z" fill="none" stroke="#fff" stroke-width="1.2"/><path d="M15.5 6.3V10.6H19.8Z" fill="#fff"/><path d="M10.5 13.6H16.8M10.5 15.8H16.8M10.5 18.1H16.8" stroke="#fff" stroke-width="1.1"/></svg>
<div class="t" style="left:537.50px;top:186.62px;font-size:8.25px;line-height:8.25px;font-weight:400;color:#707070;">ORDERS</div>
<div class="t" style="left:537.50px;top:199.30px;font-size:11.7px;line-height:11.7px;"><span style="font-weight:700;font-size:11.7px;color:#444">0</span><span style="font-weight:400;font-size:9.4px;color:#707070"> unprocessed</span></div>
<div class="t" style="left:537.50px;top:214.20px;font-size:11.7px;line-height:11.7px;"><span style="font-weight:700;font-size:11.7px;color:#444">65</span><span style="font-weight:400;font-size:9.4px;color:#707070"> all</span></div>
<div class="r" style="left:499.80px;top:233.20px;width:115.80px;height:1.00px;background:#e9e9ec;"></div>
<div class="r" style="left:499.80px;top:238.80px;width:27.30px;height:27.20px;background:#04a2a2;"></div>
<svg class="r" style="left:499.80px;top:238.80px;" width="27.3" height="27.3" viewBox="0 0 27.3 27.3"><path d="M4.4 6.8V20.5H23" fill="none" stroke="#fff" stroke-width="1.1"/><rect x="7.7" y="14.1" width="2.2" height="4.3" fill="#fff"/><rect x="11.4" y="9" width="2" height="9.4" fill="#fff"/><rect x="15.1" y="11.8" width="2.1" height="6.6" fill="#fff"/><rect x="18.5" y="8" width="2.2" height="10.4" fill="#fff"/></svg>
<div class="t" style="left:531.60px;top:240.71px;font-size:7.08px;line-height:7.08px;font-weight:400;color:#707070;">AVG. NET ORDER</div>
<div class="t" style="left:531.60px;top:251.38px;font-size:11.6px;line-height:11.6px;"><span style="font-weight:700;font-size:11.6px;color:#444">£848.29</span></div>
<div class="r" style="left:499.80px;top:269.30px;width:115.80px;height:1.00px;background:#e9e9ec;"></div>
<div class="r" style="left:499.80px;top:275.00px;width:27.30px;height:27.30px;background:#04a2a2;"></div>
<div class="t" style="left:508.10px;top:279.36px;font-size:18px;line-height:18px;font-weight:700;color:#fff;">£</div>
<div class="t" style="left:531.60px;top:277.01px;font-size:7.08px;line-height:7.08px;font-weight:400;color:#707070;">TOTAL AMOUNT</div>
<div class="t" style="left:531.60px;top:287.68px;font-size:11.6px;line-height:11.6px;"><span style="font-weight:700;font-size:11.6px;color:#444">£55,498.09</span></div>
<div class="r" style="left:499.80px;top:310.70px;width:115.80px;height:27.30px;background:#ececec;border:1px solid #e2e2e2;border-bottom-color:#d9d9d9;border-radius:3px;box-sizing:border-box;"></div>
<div class="r" style="left:589.00px;top:311.50px;width:1.00px;height:25.70px;background:#e1e1e1;"></div>
<div class="t" style="left:505.80px;top:319.34px;font-size:10.58px;line-height:10.58px;font-weight:700;color:#4e4e52;">SHOW ORDERS</div>
<svg class="r" style="left:599.60px;top:321.00px;" width="6" height="7.5" viewBox="0 0 6 7.5"><path d="M1 .8L4.5 3.75L1 6.7" fill="none" stroke="#555" stroke-width="1.2"/></svg>
<div class="t" style="left:630.30px;top:122.40px;font-size:13px;line-height:13px;font-weight:400;color:#555;">This month</div>
<div class="r" style="left:629.90px;top:142.20px;width:114.30px;height:1.00px;background:#e9e9ec;"></div>
<div class="r" style="left:629.90px;top:147.90px;width:27.30px;height:27.30px;background:#20bb28;"></div>
<svg class="r" style="left:629.90px;top:147.90px;" width="27.3" height="27.3" viewBox="0 0 27.3 27.3"><circle cx="8.2" cy="7.7" r="2.4" fill="#fff"/><circle cx="18.9" cy="7.7" r="2.4" fill="#fff"/><path d="M4.5 14.9V12.6c0-1.4.9-2.4 2.6-2.4h2c1.6 0 2.5 1 2.5 2.4v2.3z" fill="#fff"/><path d="M15.5 14.9V12.6c0-1.4.9-2.4 2.5-2.4h2c1.7 0 2.6 1 2.6 2.4v2.3z" fill="#fff"/><circle cx="13.6" cy="11.3" r="3.6" fill="#fff" stroke="#20bb28" stroke-width=".9"/><path d="M7 22V18.3c0-2.2 2-3.6 6.6-3.6s6.6 1.4 6.6 3.6V22z" fill="#fff" stroke="#20bb28" stroke-width=".9"/></svg>
<div class="t" style="left:661.40px;top:149.75px;font-size:7.15px;line-height:7.15px;font-weight:400;color:#707070;">CLIENTS</div>
<div class="t" style="left:661.40px;top:160.30px;font-size:11.7px;line-height:11.7px;"><span style="font-weight:700;font-size:11.7px;color:#444">0</span></div>
<div class="r" style="left:629.90px;top:178.30px;width:114.30px;height:1.00px;background:#e9e9ec;"></div>
<div class="r" style="left:629.90px;top:184.00px;width:27.30px;height:27.30px;background:#20bb28;"></div>
<svg class="r" style="left:629.90px;top:184.00px;" width="27.3" height="27.3" viewBox="0 0 27.3 27.3"><path d="M7.2 6.3H15.5L19.8 10.6V22H7.2Z" fill="none" stroke="#fff" stroke-width="1.2"/><path d="M15.5 6.3V10.6H19.8Z" fill="#fff"/><path d="M10.5 13.6H16.8M10.5 15.8H16.8M10.5 18.1H16.8" stroke="#fff" stroke-width="1.1"/></svg>
<div class="t" style="left:667.60px;top:186.62px;font-size:8.25px;line-height:8.25px;font-weight:400;color:#707070;">ORDERS</div>
<div class="t" style="left:667.60px;top:199.30px;font-size:11.7px;line-height:11.7px;"><span style="font-weight:700;font-size:11.7px;color:#444">0</span><span style="font-weight:400;font-size:9.4px;color:#707070"> unprocessed</span></div>
<div class="t" style="left:667.60px;top:214.20px;font-size:11.7px;line-height:11.7px;"><span style="font-weight:700;font-size:11.7px;color:#444">723</span><span style="font-weight:400;font-size:9.4px;color:#707070"> all</span></div>
<div class="r" style="left:629.90px;top:233.20px;width:114.30px;height:1.00px;background:#e9e9ec;"></div>
<div class="r" style="left:629.90px;top:238.80px;width:27.30px;height:27.20px;background:#20bb28;"></div>
<svg class="r" style="left:629.90px;top:238.80px;" width="27.3" height="27.3" viewBox="0 0 27.3 27.3"><path d="M4.4 6.8V20.5H23" fill="none" stroke="#fff" stroke-width="1.1"/><rect x="7.7" y="14.1" width="2.2" height="4.3" fill="#fff"/><rect x="11.4" y="9" width="2" height="9.4" fill="#fff"/><rect x="15.1" y="11.8" width="2.1" height="6.6" fill="#fff"/><rect x="18.5" y="8" width="2.2" height="10.4" fill="#fff"/></svg>
<div class="t" style="left:661.70px;top:240.71px;font-size:7.08px;line-height:7.08px;font-weight:400;color:#707070;">AVG. NET ORDER</div>
<div class="t" style="left:661.70px;top:251.38px;font-size:11.6px;line-height:11.6px;"><span style="font-weight:700;font-size:11.6px;color:#444">£748.39</span></div>
<div class="r" style="left:629.90px;top:269.30px;width:114.30px;height:1.00px;background:#e9e9ec;"></div>
<div class="r" style="left:629.90px;top:275.00px;width:27.30px;height:27.30px;background:#20bb28;"></div>
<div class="t" style="left:638.20px;top:279.36px;font-size:18px;line-height:18px;font-weight:700;color:#fff;">£</div>
<div class="t" style="left:661.70px;top:277.01px;font-size:7.08px;line-height:7.08px;font-weight:400;color:#707070;">TOTAL AMOUNT</div>
<div class="t" style="left:661.70px;top:287.68px;font-size:11.6px;line-height:11.6px;"><span style="font-weight:700;font-size:11.6px;color:#444">£545,045.28</span></div>
<div class="r" style="left:629.90px;top:310.70px;width:114.30px;height:27.30px;background:#ececec;border:1px solid #e2e2e2;border-bottom-color:#d9d9d9;border-radius:3px;box-sizing:border-box;"></div>
<div class="r" style="left:717.60px;top:311.50px;width:1.00px;height:25.70px;background:#e1e1e1;"></div>
<div class="t" style="left:635.90px;top:319.34px;font-size:10.58px;line-height:10.58px;font-weight:700;color:#4e4e52;">SHOW ORDERS</div>
<svg class="r" style="left:728.20px;top:321.00px;" width="6" height="7.5" viewBox="0 0 6 7.5"><path d="M1 .8L4.5 3.75L1 6.7" fill="none" stroke="#555" stroke-width="1.2"/></svg>
<div class="t" style="left:757.90px;top:122.40px;font-size:13px;line-height:13px;font-weight:400;color:#555;">This year</div>
<div class="r" style="left:757.50px;top:142.20px;width:114.50px;height:1.00px;background:#e9e9ec;"></div>
<div class="r" style="left:757.50px;top:147.90px;width:27.30px;height:27.30px;background:#ffb000;"></div>
<svg class="r" style="left:757.50px;top:147.90px;" width="27.3" height="27.3" viewBox="0 0 27.3 27.3"><circle cx="8.2" cy="7.7" r="2.4" fill="#fff"/><circle cx="18.9" cy="7.7" r="2.4" fill="#fff"/><path d="M4.5 14.9V12.6c0-1.4.9-2.4 2.6-2.4h2c1.6 0 2.5 1 2.5 2.4v2.3z" fill="#fff"/><path d="M15.5 14.9V12.6c0-1.4.9-2.4 2.5-2.4h2c1.7 0 2.6 1 2.6 2.4v2.3z" fill="#fff"/><circle cx="13.6" cy="11.3" r="3.6" fill="#fff" stroke="#ffb000" stroke-width=".9"/><path d="M7 22V18.3c0-2.2 2-3.6 6.6-3.6s6.6 1.4 6.6 3.6V22z" fill="#fff" stroke="#ffb000" stroke-width=".9"/></svg>
<div class="t" style="left:789.00px;top:149.75px;font-size:7.15px;line-height:7.15px;font-weight:400;color:#707070;">CLIENTS</div>
<div class="t" style="left:789.00px;top:160.30px;font-size:11.7px;line-height:11.7px;"><span style="font-weight:700;font-size:11.7px;color:#444">1</span></div>
<div class="r" style="left:757.50px;top:178.30px;width:114.50px;height:1.00px;background:#e9e9ec;"></div>
<div class="r" style="left:757.50px;top:184.00px;width:27.30px;height:27.30px;background:#ffb000;"></div>
<svg class="r" style="left:757.50px;top:184.00px;" width="27.3" height="27.3" viewBox="0 0 27.3 27.3"><path d="M7.2 6.3H15.5L19.8 10.6V22H7.2Z" fill="none" stroke="#fff" stroke-width="1.2"/><path d="M15.5 6.3V10.6H19.8Z" fill="#fff"/><path d="M10.5 13.6H16.8M10.5 15.8H16.8M10.5 18.1H16.8" stroke="#fff" stroke-width="1.1"/></svg>
<div class="t" style="left:795.20px;top:186.62px;font-size:8.25px;line-height:8.25px;font-weight:400;color:#707070;">ORDERS</div>
<div class="t" style="left:795.20px;top:199.30px;font-size:11.7px;line-height:11.7px;"><span style="font-weight:700;font-size:11.7px;color:#444">0</span><span style="font-weight:400;font-size:9.4px;color:#707070"> unprocessed</span></div>
<div class="t" style="left:795.20px;top:214.20px;font-size:11.7px;line-height:11.7px;"><span style="font-weight:700;font-size:11.7px;color:#444">5,387</span><span style="font-weight:400;font-size:9.4px;color:#707070"> all</span></div>
<div class="r" style="left:757.50px;top:233.20px;width:114.50px;height:1.00px;background:#e9e9ec;"></div>
<div class="r" style="left:757.50px;top:238.80px;width:27.30px;height:27.20px;background:#ffb000;"></div>
<svg class="r" style="left:757.50px;top:238.80px;" width="27.3" height="27.3" viewBox="0 0 27.3 27.3"><path d="M4.4 6.8V20.5H23" fill="none" stroke="#fff" stroke-width="1.1"/><rect x="7.7" y="14.1" width="2.2" height="4.3" fill="#fff"/><rect x="11.4" y="9" width="2" height="9.4" fill="#fff"/><rect x="15.1" y="11.8" width="2.1" height="6.6" fill="#fff"/><rect x="18.5" y="8" width="2.2" height="10.4" fill="#fff"/></svg>
<div class="t" style="left:789.30px;top:240.71px;font-size:7.08px;line-height:7.08px;font-weight:400;color:#707070;">AVG. NET ORDER</div>
<div class="t" style="left:789.30px;top:251.38px;font-size:11.6px;line-height:11.6px;"><span style="font-weight:700;font-size:11.6px;color:#444">£706.25</span></div>
<div class="r" style="left:757.50px;top:269.30px;width:114.50px;height:1.00px;background:#e9e9ec;"></div>
<div class="r" style="left:757.50px;top:275.00px;width:27.30px;height:27.30px;background:#ffb000;"></div>
<div class="t" style="left:765.80px;top:279.36px;font-size:18px;line-height:18px;font-weight:700;color:#fff;">£</div>
<div class="t" style="left:789.30px;top:277.01px;font-size:7.08px;line-height:7.08px;font-weight:400;color:#707070;">TOTAL AMOUNT</div>
<div class="t" style="left:789.30px;top:287.68px;font-size:11.6px;line-height:11.6px;"><span style="font-weight:700;font-size:11.6px;color:#444">£3,834,083.29</span></div>
<div class="r" style="left:757.50px;top:310.70px;width:114.50px;height:27.30px;background:#ececec;border:1px solid #e2e2e2;border-bottom-color:#d9d9d9;border-radius:3px;box-sizing:border-box;"></div>
<div class="r" style="left:845.40px;top:311.50px;width:1.00px;height:25.70px;background:#e1e1e1;"></div>
<div class="t" style="left:763.50px;top:319.34px;font-size:10.58px;line-height:10.58px;font-weight:700;color:#4e4e52;">SHOW ORDERS</div>
<svg class="r" style="left:856.00px;top:321.00px;" width="6" height="7.5" viewBox="0 0 6 7.5"><path d="M1 .8L4.5 3.75L1 6.7" fill="none" stroke="#555" stroke-width="1.2"/></svg>
<div class="t" style="left:886.10px;top:122.40px;font-size:13px;line-height:13px;font-weight:400;color:#555;">Lifetime</div>
<div class="r" style="left:885.70px;top:142.20px;width:114.60px;height:1.00px;background:#e9e9ec;"></div>
<div class="r" style="left:885.70px;top:147.90px;width:27.30px;height:27.30px;background:#f5301e;"></div>
<svg class="r" style="left:885.70px;top:147.90px;" width="27.3" height="27.3" viewBox="0 0 27.3 27.3"><circle cx="8.2" cy="7.7" r="2.4" fill="#fff"/><circle cx="18.9" cy="7.7" r="2.4" fill="#fff"/><path d="M4.5 14.9V12.6c0-1.4.9-2.4 2.6-2.4h2c1.6 0 2.5 1 2.5 2.4v2.3z" fill="#fff"/><path d="M15.5 14.9V12.6c0-1.4.9-2.4 2.5-2.4h2c1.7 0 2.6 1 2.6 2.4v2.3z" fill="#fff"/><circle cx="13.6" cy="11.3" r="3.6" fill="#fff" stroke="#f5301e" stroke-width=".9"/><path d="M7 22V18.3c0-2.2 2-3.6 6.6-3.6s6.6 1.4 6.6 3.6V22z" fill="#fff" stroke="#f5301e" stroke-width=".9"/></svg>
<div class="t" style="left:917.20px;top:149.75px;font-size:7.15px;line-height:7.15px;font-weight:400;color:#707070;">CLIENTS</div>
<div class="t" style="left:917.20px;top:160.30px;font-size:11.7px;line-height:11.7px;"><span style="font-weight:700;font-size:11.7px;color:#444">25</span></div>
<div class="r" style="left:885.70px;top:178.30px;width:114.60px;height:1.00px;background:#e9e9ec;"></div>
<div class="r" style="left:885.70px;top:184.00px;width:27.30px;height:27.30px;background:#f5301e;"></div>
<svg class="r" style="left:885.70px;top:184.00px;" width="27.3" height="27.3" viewBox="0 0 27.3 27.3"><path d="M7.2 6.3H15.5L19.8 10.6V22H7.2Z" fill="none" stroke="#fff" stroke-width="1.2"/><path d="M15.5 6.3V10.6H19.8Z" fill="#fff"/><path d="M10.5 13.6H16.8M10.5 15.8H16.8M10.5 18.1H16.8" stroke="#fff" stroke-width="1.1"/></svg>
<div class="t" style="left:923.40px;top:186.62px;font-size:8.25px;line-height:8.25px;font-weight:400;color:#707070;">ORDERS</div>
<div class="t" style="left:923.40px;top:199.30px;font-size:11.7px;line-height:11.7px;"><span style="font-weight:700;font-size:11.7px;color:#444">0</span><span style="font-weight:400;font-size:9.4px;color:#707070"> unprocessed</span></div>
<div class="t" style="left:923.40px;top:214.20px;font-size:11.7px;line-height:11.7px;"><span style="font-weight:700;font-size:11.7px;color:#444">10,417</span><span style="font-weight:400;font-size:9.4px;color:#707070"> all</span></div>
<div class="r" style="left:885.70px;top:233.20px;width:114.60px;height:1.00px;background:#e9e9ec;"></div>
<div class="r" style="left:885.70px;top:238.80px;width:27.30px;height:27.20px;background:#f5301e;"></div>
<svg class="r" style="left:885.70px;top:238.80px;" width="27.3" height="27.3" viewBox="0 0 27.3 27.3"><path d="M4.4 6.8V20.5H23" fill="none" stroke="#fff" stroke-width="1.1"/><rect x="7.7" y="14.1" width="2.2" height="4.3" fill="#fff"/><rect x="11.4" y="9" width="2" height="9.4" fill="#fff"/><rect x="15.1" y="11.8" width="2.1" height="6.6" fill="#fff"/><rect x="18.5" y="8" width="2.2" height="10.4" fill="#fff"/></svg>
<div class="t" style="left:917.50px;top:240.71px;font-size:7.08px;line-height:7.08px;font-weight:400;color:#707070;">AVG. NET ORDER</div>
<div class="t" style="left:917.50px;top:251.38px;font-size:11.6px;line-height:11.6px;"><span style="font-weight:700;font-size:11.6px;color:#444">£702.27</span></div>
<div class="r" style="left:885.70px;top:269.30px;width:114.60px;height:1.00px;background:#e9e9ec;"></div>
<div class="r" style="left:885.70px;top:275.00px;width:27.30px;height:27.30px;background:#f5301e;"></div>
<div class="t" style="left:894.00px;top:279.36px;font-size:18px;line-height:18px;font-weight:700;color:#fff;">£</div>
<div class="t" style="left:917.50px;top:277.01px;font-size:7.08px;line-height:7.08px;font-weight:400;color:#707070;">TOTAL AMOUNT</div>
<div class="t" style="left:917.50px;top:287.68px;font-size:11.6px;line-height:11.6px;"><span style="font-weight:700;font-size:11.6px;color:#444">£7,372,614.84</span></div>
<div class="r" style="left:885.70px;top:310.70px;width:114.60px;height:27.30px;background:#ececec;border:1px solid #e2e2e2;border-bottom-color:#d9d9d9;border-radius:3px;box-sizing:border-box;"></div>
<div class="r" style="left:973.70px;top:311.50px;width:1.00px;height:25.70px;background:#e1e1e1;"></div>
<div class="t" style="left:891.70px;top:319.34px;font-size:10.58px;line-height:10.58px;font-weight:700;color:#4e4e52;">SHOW ORDERS</div>
<svg class="r" style="left:984.30px;top:321.00px;" width="6" height="7.5" viewBox="0 0 6 7.5"><path d="M1 .8L4.5 3.75L1 6.7" fill="none" stroke="#555" stroke-width="1.2"/></svg>
<div class="r" style="left:164.20px;top:368.00px;width:859.80px;height:1.00px;background:#e4e3ea;"></div>
<div class="r" style="left:177.00px;top:382.00px;width:414.50px;height:138.00px;background:#fff;border:1px solid #dfdee4;box-sizing:border-box;"></div>
<div class="r" style="left:178.00px;top:383.00px;width:412.50px;height:28.00px;background:#e7e2fd;"></div>
<svg class="r" style="left:185.70px;top:391.20px;" width="10" height="11" viewBox="0 0 10 11"><path d="M.5 .3H6.5L9.6 3.4V10.8H.5Z" fill="#8a8794"/><path d="M6.5 .3V3.4H9.6" fill="#cfcbd9"/><path d="M2.5 6.2H7.5M2.5 8.2H7.5" stroke="#e7e2fd" stroke-width=".9"/></svg>
<div class="t" style="left:201.40px;top:391.42px;font-size:11.2px;line-height:11.2px;font-weight:700;color:#48454f;">New Orders</div>
<div class="r" style="left:573.30px;top:384.00px;width:1.00px;height:26.50px;background:#d8d3ea;"></div>
<div class="r" style="left:579.40px;top:397.00px;width:6.60px;height:2.00px;background:#444;"></div>
<div class="r" style="left:184.40px;top:419.40px;width:399.40px;height:100.60px;background:#fff;border:1px solid #e0dfe4;box-sizing:border-box;"></div>
<div class="r" style="left:185.40px;top:420.40px;width:397.40px;height:23.20px;background:#e7e2fd;"></div>
<div class="r" style="left:358.10px;top:420.00px;width:1.00px;height:100.00px;background:#e0dfe4;"></div>
<div class="r" style="left:442.20px;top:420.00px;width:1.00px;height:100.00px;background:#e0dfe4;"></div>
<div class="r" style="left:505.10px;top:420.00px;width:1.00px;height:100.00px;background:#e0dfe4;"></div>
<div class="r" style="left:185.00px;top:443.10px;width:398.50px;height:1.00px;background:#e0dfe4;"></div>
<div class="r" style="left:185.00px;top:467.70px;width:398.50px;height:1.00px;background:#e0dfe4;"></div>
<div class="r" style="left:185.00px;top:492.50px;width:398.50px;height:1.00px;background:#e0dfe4;"></div>
<div class="t" style="left:190.60px;top:426.58px;font-size:9px;line-height:9px;font-weight:700;color:#3d3a45;">Customers</div>
<svg class="r" style="left:349.20px;top:426.40px;" width="5" height="4" viewBox="0 0 5 4"><path d="M0 3.8L2.5 0L5 3.8z" fill="#222"/></svg>
<div class="t" style="right:595.80px;top:426.72px;font-size:8.84px;line-height:8.84px;font-weight:700;color:#3d3a45;">Order Total</div>
<div class="t" style="right:532.10px;top:426.78px;font-size:8.77px;line-height:8.77px;font-weight:700;color:#3d3a45;">Order ID</div>
<div class="t" style="right:455.20px;top:426.77px;font-size:8.78px;line-height:8.78px;font-weight:700;color:#3d3a45;">Post Code</div>
<svg class="r" style="left:433.40px;top:425.80px;" width="5" height="10.5" viewBox="0 0 5 10.5"><path d="M.2 3.9L2.5 .4L4.8 3.9zM.2 7L2.5 10.4L4.8 7z" fill="#222"/></svg>
<svg class="r" style="left:496.70px;top:425.80px;" width="5" height="10.5" viewBox="0 0 5 10.5"><path d="M.2 3.9L2.5 .4L4.8 3.9zM.2 7L2.5 10.4L4.8 7z" fill="#222"/></svg>
<svg class="r" style="left:574.20px;top:425.80px;" width="5" height="10.5" viewBox="0 0 5 10.5"><path d="M.2 3.9L2.5 .4L4.8 3.9zM.2 7L2.5 10.4L4.8 7z" fill="#222"/></svg>
<div class="t" style="left:190.60px;top:451.98px;font-size:10.07px;line-height:10.07px;font-weight:400;color:#555;">Brunhild Kruger</div>
<div class="t" style="right:595.80px;top:451.72px;font-size:10.37px;line-height:10.37px;font-weight:400;color:#555;">£302.89</div>
<div class="t" style="right:532.10px;top:452.04px;font-size:10px;line-height:10px;font-weight:400;color:#555;letter-spacing:-0.25px;">10778</div>
<div class="t" style="right:455.20px;top:452.04px;font-size:10px;line-height:10px;font-weight:400;color:#555;letter-spacing:-0.25px;">39418</div>
<div class="t" style="left:190.60px;top:476.78px;font-size:10.07px;line-height:10.07px;font-weight:400;color:#555;">Dolores Gutierrez</div>
<div class="t" style="right:595.80px;top:476.52px;font-size:10.37px;line-height:10.37px;font-weight:400;color:#555;">£199.20</div>
<div class="t" style="right:532.10px;top:476.84px;font-size:10px;line-height:10px;font-weight:400;color:#555;letter-spacing:-0.25px;">10779</div>
<div class="t" style="right:455.20px;top:476.84px;font-size:10px;line-height:10px;font-weight:400;color:#555;letter-spacing:-0.25px;">97206</div>
<div class="r" style="left:605.40px;top:382.00px;width:414.60px;height:138.00px;background:#fff;border:1px solid #dfdee4;box-sizing:border-box;"></div>
<div class="r" style="left:606.40px;top:383.00px;width:412.60px;height:28.00px;background:#e7e2fd;"></div>
<svg class="r" style="left:613.60px;top:392.50px;" width="13.5" height="9.2" viewBox="0 0 13.5 9.2"><path d="M.5 0V9" stroke="#8a8794" stroke-width="1"/><path d="M1.5 9V4L4 1.5L6.5 5.2L9 2.8L11 4.8L12.8 9Z" fill="#8a8794"/></svg>
<div class="t" style="left:632.60px;top:391.41px;font-size:11.21px;line-height:11.21px;font-weight:700;color:#48454f;">Sales for the last 12 months (current month is forecasting)</div>
<div class="r" style="left:1001.60px;top:384.00px;width:1.00px;height:26.50px;background:#d8d3ea;"></div>
<div class="r" style="left:1007.00px;top:397.00px;width:7.00px;height:2.00px;background:#444;"></div>
</body></html>
